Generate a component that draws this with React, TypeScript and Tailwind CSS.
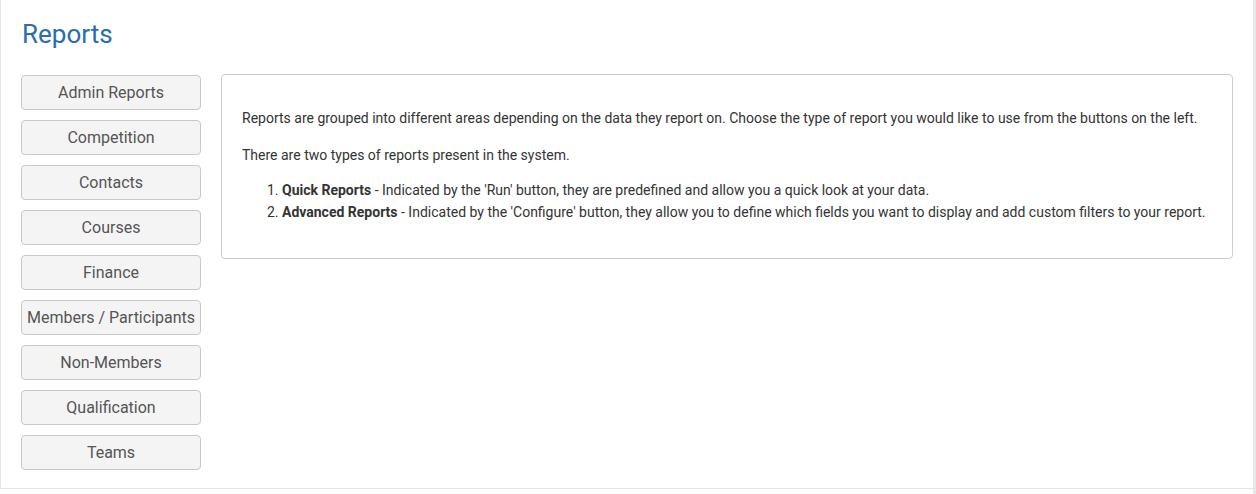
const categories = [
  "Admin Reports",
  "Competition",
  "Contacts",
  "Courses",
  "Finance",
  "Members / Participants",
  "Non-Members",
  "Qualification",
  "Teams",
];

export default function App() {
  return (
    <div className="flex h-[494px] bg-white font-['Roboto',_'Liberation_Sans',_sans-serif]">
      <div className="h-[489px] flex-1 border-b border-l border-[#e6e6e6] pl-[20px] pt-[17px]">
        <h1 className="pl-[1px] text-[26px] leading-[34px] text-[#2a6cb0]">Reports</h1>

        <div className="mt-[23px] flex items-start gap-[20px]">
          <div className="mt-[1px] flex w-[180px] flex-col gap-[10px]">
            {categories.map((name) => (
              <button
                key={name}
                type="button"
                className="h-[35px] w-full rounded-[4px] border border-[#c9c9c9] bg-[#f4f4f4] pt-[1px] text-[16px] text-[#555555]"
              >
                {name}
              </button>
            ))}
          </div>

          <div className="h-[185px] w-[1012px] rounded-[4px] border border-[#cccccc] px-[20px] pt-[33px] text-[14px] text-[#333333]">
            <p className="mb-[17px] leading-[20px]">
              Reports are grouped into different areas depending on the data they report on. Choose the
              type of report you would like to use from the buttons on the left.
            </p>
            <p className="mb-[14px] leading-[20px]">There are two types of reports present in the system.</p>
            <ol className="list-decimal pl-[40px] leading-[22px]">
              <li>
                <b>Quick Reports</b> - Indicated by the 'Run' button, they are predefined and allow you a
                quick look at your data.
              </li>
              <li>
                <b>Advanced Reports</b> - Indicated by the 'Configure' button, they allow you to define which
                fields you want to display and add custom filters to your report.
              </li>
            </ol>
          </div>
        </div>
      </div>
      <div className="w-[3px] bg-[#e8e8e8]" />
    </div>
  );
}
